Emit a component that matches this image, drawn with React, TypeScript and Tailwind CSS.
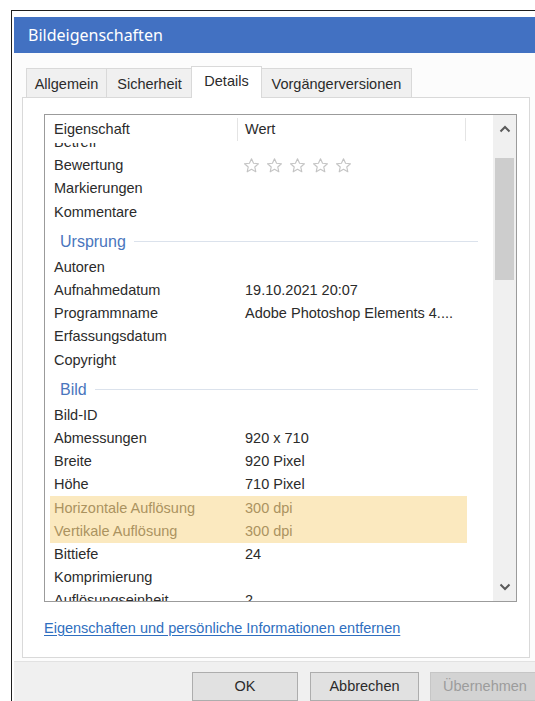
import React from "react"

type Item =
  | { kind: "row"; label: string; value?: string; stars?: boolean; hl?: boolean }
  | { kind: "group"; label: string }

const items: Item[] = [
  { kind: "row", label: "Betreff" },
  { kind: "row", label: "Bewertung", stars: true },
  { kind: "row", label: "Markierungen" },
  { kind: "row", label: "Kommentare" },
  { kind: "group", label: "Ursprung" },
  { kind: "row", label: "Autoren" },
  { kind: "row", label: "Aufnahmedatum", value: "19.10.2021 20:07" },
  { kind: "row", label: "Programmname", value: "Adobe Photoshop Elements 4...." },
  { kind: "row", label: "Erfassungsdatum" },
  { kind: "row", label: "Copyright" },
  { kind: "group", label: "Bild" },
  { kind: "row", label: "Bild-ID" },
  { kind: "row", label: "Abmessungen", value: "920 x 710" },
  { kind: "row", label: "Breite", value: "920 Pixel" },
  { kind: "row", label: "Höhe", value: "710 Pixel" },
  { kind: "row", label: "Horizontale Auflösung", value: "300 dpi", hl: true },
  { kind: "row", label: "Vertikale Auflösung", value: "300 dpi", hl: true },
  { kind: "row", label: "Bittiefe", value: "24" },
  { kind: "row", label: "Komprimierung" },
  { kind: "row", label: "Auflösungseinheit", value: "2" },
]

const tabs = [
  { label: "Allgemein", w: "w-[80px]" },
  { label: "Sicherheit", w: "w-[86px]" },
  { label: "Details", w: "w-[71px]", active: true },
  { label: "Vorgängerversionen", w: "w-[151px]" },
]

function Star() {
  return (
    <svg width="17" height="17" viewBox="0 0 24 24" fill="none" stroke="#c4c4c4" strokeWidth="1.6" strokeLinejoin="round">
      <path d="M12 2.5l2.9 6.3 6.9.7-5.2 4.6 1.5 6.8L12 17.4l-6.1 3.5 1.5-6.8-5.2-4.6 6.9-.7z" />
    </svg>
  )
}

function Chevron({ down }: { down?: boolean }) {
  return (
    <svg width="12" height="8" viewBox="0 0 12 8" fill="none" stroke="#5a5a5a" strokeWidth="2">
      {down ? <polyline points="1.5,1.5 6,6 10.5,1.5" /> : <polyline points="1.5,6.5 6,2 10.5,6.5" />}
    </svg>
  )
}

function Row({ item }: { item: Item }) {
  if (item.kind === "group") {
    return (
      <div className="h-[32px] w-[433px] pl-[15px] pt-[3px] flex items-center gap-[8px]">
        <span className="text-[16px] text-[#4a76bd]">{item.label}</span>
        <div className="flex-1 h-px bg-[#dbe2ec]" />
      </div>
    )
  }
  return (
    <div
      className={`h-[23.2px] ml-[5px] w-[417px] flex items-center ${
        item.hl ? "bg-[#fbe9bf] text-[#ab935f]" : "text-[#2b2b2b]"
      }`}
    >
      <div className="w-[195px] pl-[4px] whitespace-nowrap">{item.label}</div>
      <div className="flex-1 whitespace-nowrap">
        {item.stars ? (
          <div className="flex gap-[6px] -ml-[2px]">
            <Star />
            <Star />
            <Star />
            <Star />
            <Star />
          </div>
        ) : (
          item.value
        )}
      </div>
    </div>
  )
}

export default function App() {
  return (
    <div className="w-[535px] h-[701px] overflow-hidden bg-white font-['Liberation_Sans',Arial,sans-serif] text-[14.5px] leading-[17px]">
      <div className="ml-[11px] mt-[10px] w-[540px] h-[700px] border-l border-t border-[#1e1e1e] pl-[2px] pt-[6px] flex flex-col bg-white">
        {/* title bar */}
        <div className="h-[36px] shrink-0 bg-[#4271c2] flex items-center pl-[14px] text-white text-[16px] font-['Noto_Sans',sans-serif]">
          Bildeigenschaften
        </div>

        <div className="flex-1 flex flex-col bg-[#fcfcfc]">
          {/* tab strip */}
          <div className="pt-[13px] pl-[12px] flex items-end relative z-10">
            {tabs.map((t) =>
              t.active ? (
                <div
                  key={t.label}
                  className={`${t.w} -mx-[1px] h-[32px] -mb-px bg-white border border-b-0 border-[#d9d9d9] flex items-start justify-center pt-[6px] text-[#2b2b2b]`}
                >
                  {t.label}
                </div>
              ) : (
                <div
                  key={t.label}
                  className={`${t.w} h-[29px] pt-[3px] bg-[#f0f0f0] border border-b-0 border-r-0 last:border-r border-[#d9d9d9] flex items-center justify-center text-[#2b2b2b]`}
                >
                  {t.label}
                </div>
              )
            )}
          </div>

          {/* tab page */}
          <div className="ml-[8px] w-[508px] h-[561px] shrink-0 bg-white border border-[#d9d9d9] pl-[21px] pt-[16px]">
            <div className="w-[473px] h-[488px] border border-[#9b9b9b] flex">
              <div className="w-[448px] flex flex-col">
                <div className="h-[28px] shrink-0 flex items-stretch text-[#2b2b2b] pt-[1px]">
                  <div className="w-[193px] pl-[9px] flex items-center border-r border-[#e4e4e4] my-[2px]">Eigenschaft</div>
                  <div className="w-[228px] pl-[7px] flex items-center border-r border-[#e4e4e4] my-[2px]">Wert</div>
                </div>
                <div className="h-[458px] overflow-hidden">
                  <div className="-mt-[12px]">
                    {items.map((it, i) => (
                      <Row key={i} item={it} />
                    ))}
                  </div>
                </div>
              </div>

              {/* scrollbar */}
              <div className="w-[23px] bg-[#f0f0f0] flex flex-col items-center">
                <div className="h-[26px] flex items-center justify-center pt-[2px]">
                  <Chevron />
                </div>
                <div className="mt-[17px] w-[19px] h-[122px] bg-[#cdcdcd]" />
                <div className="flex-1" />
                <div className="h-[26px] flex items-center justify-center pb-[2px]">
                  <Chevron down />
                </div>
              </div>
            </div>

            <div className="mt-[18px] text-[#2f6fc0] underline underline-offset-2">
              Eigenschaften und persönliche Informationen entfernen
            </div>
          </div>

          {/* buttons */}
          <div className="flex-1 mt-[3px] border-t border-[#e2e2e2] bg-[#f0f0f0] pt-[10px] pl-[178px] flex items-start gap-[12px]">
            <div className="w-[106px] h-[29px] bg-[#e1e1e1] border border-[#adadad] flex items-center justify-center text-[#2b2b2b]">
              OK
            </div>
            <div className="w-[109px] h-[29px] bg-[#e1e1e1] border border-[#adadad] flex items-center justify-center text-[#2b2b2b]">
              Abbrechen
            </div>
            <div className="w-[110px] h-[29px] -ml-px bg-[#d3d3d3] border border-[#c6c6c6] flex items-center justify-center text-[#9c9c9c]">
              Übernehmen
            </div>
          </div>
        </div>
      </div>
    </div>
  )
}
